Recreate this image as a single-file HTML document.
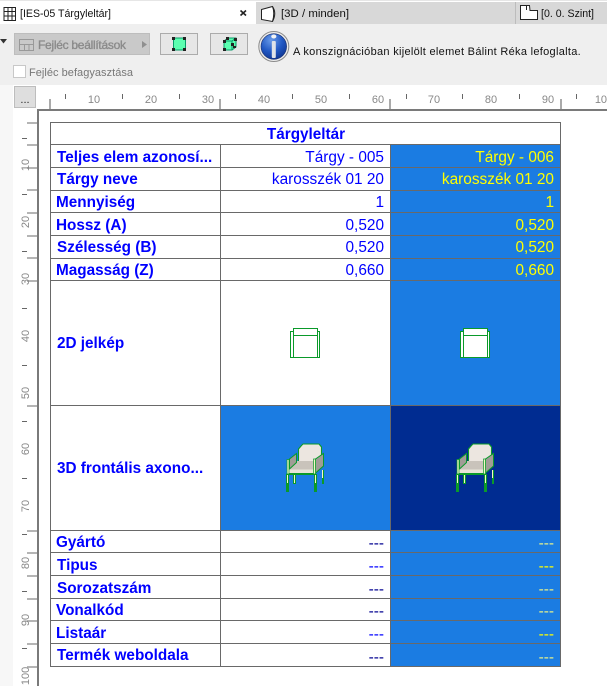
<!DOCTYPE html>
<html><head><meta charset="utf-8"><style>
html,body{margin:0;padding:0;background:#fff;width:607px;height:686px;overflow:hidden}
svg{display:block}
text{font-family:"Liberation Sans",Arial,sans-serif}
.t{font-size:11px;fill:#111}
.r{font-size:11px;fill:#888;text-anchor:middle}
.l{font-size:15.3px;font-weight:bold;fill:#0000ff}
.v{font-size:15.4px;fill:#0000ff;text-anchor:end}
.y{font-size:15.4px;fill:#ffff00;text-anchor:end}
.vd{font-size:15.4px;fill:#000090;text-anchor:end}
.yd{font-size:15.4px;fill:#e4f08c;text-anchor:end}
</style></head><body>
<svg width="607" height="686" viewBox="0 0 607 686" xmlns="http://www.w3.org/2000/svg">
<defs>
<radialGradient id="ib" cx="40%" cy="25%" r="80%"><stop offset="0" stop-color="#6a9be8"/><stop offset=".55" stop-color="#2259c4"/><stop offset="1" stop-color="#0e3490"/></radialGradient>
<g id="chair">
<g shape-rendering="crispEdges">
<path d="M286 474h3v18h-3zM314 474h3v18h-3zM293 474h3v10h-3zM322 470h2v14h-2z" fill="#0a9a2a"/>
<path d="M287 474h1v9h-1zM315 474h1v9h-1zM294 474h1v9h-1zM322 470h1v8h-1z" fill="#f6f6c8"/>
</g>
<path d="M298.500 461.500V449L301.500 445.500L303 444H319L321.500 447V461.500Z" fill="#ece6e0" stroke="#0a9a2a" stroke-width="1.100"/>
<path d="M297 461H315V469.500H288Z" fill="#c9c3bb"/>
<path d="M289.500 459V469L296.500 462.500V453.500Z" fill="#a09c96" stroke="#0a9a2a"/>
<path d="M315.500 459V473L323.500 466V453.500Z" fill="#a09c96" stroke="#0a9a2a"/>
<path d="M287.500 469.500H313.500V473H287.500Z" fill="#e8e4d8"/>
<path d="M286.500 473H316V475H286.500Z" fill="#0a9a2a"/>
<path d="M287 459.500H289V474H287ZM313.500 459H315.500V474H313.500Z" fill="#f6f6c8" stroke="#0a9a2a" stroke-width=".7"/>
</g>
</defs>

<!-- top tabs -->
<rect width="607" height="686" fill="#fff"/>
<rect x="256" y="2" width="351" height="22" fill="#d8d8d8"/>
<rect x="515" y="2" width="1" height="22" fill="#bcbcbc"/>
<rect x="0" y="0" width="607" height="1" fill="#e6e6e6"/>
<rect x="0" y="24" width="607" height="61" fill="#efefef"/>

<path d="M4 7.500H15.500V20.500H4ZM4 11.500H15.500M4 16H15.500M8 7.500V20.500M12 7.500V20.500" fill="none" stroke="#222" stroke-width="1"/>
<text x="20" y="17" class="t" textLength="91" lengthAdjust="spacingAndGlyphs">[IES-05 Tárgyleltár]</text>
<path d="M240.500 10.500L246 15.500M246 10.500L240.500 15.500" stroke="#222" stroke-width="1.600" fill="none"/>
<path d="M261.500 9.500L272.500 6.500Q277 13 272.500 21.500L261.500 19.500Z" fill="#fff" stroke="#222"/>
<path d="M272.500 6.500Q275 13 272.500 21.500" fill="none" stroke="#222"/>
<text x="281" y="17" class="t" textLength="68" lengthAdjust="spacingAndGlyphs">[3D / minden]</text>
<path d="M520.500 5.500H529.500L530 10.500H537.500V19.500H520.500Z" fill="#fff" stroke="#222"/>
<path d="M526.500 6V10" stroke="#222"/>
<text x="541" y="17" class="t" textLength="53" lengthAdjust="spacingAndGlyphs">[0. 0. Szint]</text>

<!-- toolbar -->
<path d="M0 39H7L3.500 43.500Z" fill="#333"/>
<rect x="14.500" y="33.500" width="135" height="21" fill="#c9c9c9" stroke="#bdbdbd"/>
<path d="M19.500 39.500H33.500V50.500H19.500ZM19.500 44.500H33.500M24.500 44.500V50.500M29 44.500V50.500" fill="none" stroke="#999"/>
<text x="38" y="49" font-size="12" fill="#8a8a8a" stroke="#8a8a8a" stroke-width=".35" textLength="88" lengthAdjust="spacing">Fejléc beállítások</text>
<path d="M142 41L147 44.500L142 48Z" fill="#8f8f8f"/>

<rect x="160.500" y="33.500" width="37" height="21" fill="#e6e6e6" stroke="#ababab"/>
<rect x="173.500" y="38" width="12" height="12" fill="#5cffb0" stroke="#0a9a6a"/>
<path d="M172 37h3v3h-3zM183 37h3v3h-3zM172 48h3v3h-3zM183 48h3v3h-3z" fill="#222"/>

<rect x="210.500" y="33.500" width="37" height="21" fill="#e6e6e6" stroke="#ababab"/>
<path d="M224 41L228 38H236V47L232 50H224Z" fill="#5cffb0" stroke="#0a9a6a"/>
<path d="M224 41H232V50M232 41L236 38" fill="none" stroke="#0a9a6a"/>
<path d="M223 40h3v3h-3zM226 37h3v3h-3zM234 38h3v3h-3zM231 43h3v3h-3zM223 48h3v3h-3zM233 46h3v2h-3z" fill="#222"/>

<circle cx="273.800" cy="46.500" r="15" fill="#ececec" stroke="#8a8a8a"/>
<circle cx="273.800" cy="46.500" r="12.800" fill="url(#ib)" stroke="#1a2f6a" stroke-width=".6"/>
<ellipse cx="273.800" cy="36.500" rx="2.600" ry="2" fill="#f4f4f4"/>
<rect x="271.800" y="41" width="4" height="17" rx="1" fill="#dfe3e8"/>
<text x="293" y="55" class="t" style="letter-spacing:.3px">A konszignációban kijelölt elemet Bálint Réka lefoglalta.</text>

<rect x="13.500" y="65.500" width="12" height="12" fill="#fff" stroke="#c8c8c8"/>
<text x="29" y="76" font-size="11" fill="#777" textLength="104" lengthAdjust="spacing">Fejléc befagyasztása</text>

<!-- ruler areas -->
<rect x="0" y="85" width="607" height="25" fill="#fff"/>
<rect x="0" y="85" width="13" height="601" fill="#f7f7f7"/>
<rect x="14.500" y="86.500" width="21" height="21" fill="#dedede" stroke="#bdbdbd"/>
<text x="25" y="103" font-size="11" fill="#222" text-anchor="middle">...</text>

<g shape-rendering="crispEdges">
<path d="M49 99h2v10h-2zM219 99h2v10h-2zM389 99h2v10h-2zM560 99h2v10h-2z" fill="#aaa"/>
<path d="M65 94h1v5h-1zM122 94h1v5h-1zM179 94h1v5h-1zM235 94h1v5h-1zM292 94h1v5h-1zM349 94h1v5h-1zM406 94h1v5h-1zM462 94h1v5h-1zM519 94h1v5h-1zM576 94h1v5h-1z" fill="#666"/>
<rect x="37" y="109" width="570" height="2" fill="#7a7a7a"/>
<rect x="37" y="109" width="2" height="577" fill="#7a7a7a"/>
<path d="M27 122h10v2h-10zM27 144h10v2h-10zM27 167h10v2h-10zM27 189h10v2h-10zM27 212h10v2h-10zM27 235h10v2h-10zM27 257h10v2h-10zM27 280h10v2h-10zM27 405h10v2h-10zM27 530h10v2h-10zM27 552h10v2h-10zM27 575h10v2h-10zM27 598h10v2h-10zM27 620h10v2h-10zM27 643h10v2h-10zM27 666h10v2h-10z" fill="#b5b5b5"/>
<path d="M22 138h5v1h-5zM22 194h5v1h-5zM22 251h5v1h-5zM22 308h5v1h-5zM22 365h5v1h-5zM22 421h5v1h-5zM22 478h5v1h-5zM22 534h5v1h-5zM22 591h5v1h-5zM22 648h5v1h-5z" fill="#666"/>
</g>
<text x="94" y="103" class="r">10</text><text x="151" y="103" class="r">20</text><text x="208" y="103" class="r">30</text><text x="264" y="103" class="r">40</text><text x="321" y="103" class="r">50</text><text x="378" y="103" class="r">60</text><text x="434" y="103" class="r">70</text><text x="491" y="103" class="r">80</text><text x="548" y="103" class="r">90</text><text x="604" y="103" class="r">100</text>
<text transform="translate(29,165) rotate(-90)" class="r">10</text>
<text transform="translate(29,222) rotate(-90)" class="r">20</text>
<text transform="translate(29,279) rotate(-90)" class="r">30</text>
<text transform="translate(29,336) rotate(-90)" class="r">40</text>
<text transform="translate(29,393) rotate(-90)" class="r">50</text>
<text transform="translate(29,449) rotate(-90)" class="r">60</text>
<text transform="translate(29,506) rotate(-90)" class="r">70</text>
<text transform="translate(29,563) rotate(-90)" class="r">80</text>
<text transform="translate(29,620) rotate(-90)" class="r">90</text>
<text transform="translate(29,676) rotate(-90)" class="r">100</text>

<!-- table fills -->
<g shape-rendering="crispEdges">
<rect x="50" y="122" width="511" height="545" fill="#fff"/>
<rect x="390" y="144" width="171" height="523" fill="#1b7ce2"/>
<rect x="220" y="405" width="170" height="125" fill="#1b7ce2"/>
<rect x="390" y="405" width="171" height="125" fill="#002c91"/>
<path d="M50 122h511v1h-511zM50 144h511v1h-511zM50 167h511v1h-511zM50 190h511v1h-511zM50 212h511v1h-511zM50 235h511v1h-511zM50 258h511v1h-511zM50 280h511v1h-511zM50 405h511v1h-511zM50 530h511v1h-511zM50 552h511v1h-511zM50 575h511v1h-511zM50 598h511v1h-511zM50 620h511v1h-511zM50 643h511v1h-511zM50 666h511v1h-511z" fill="#696969"/>
<path d="M50 122h1v545h-1zM560 122h1v545h-1zM220 144h1v523h-1zM390 144h1v523h-1z" fill="#696969"/>
</g>

<text x="306" y="139" class="l" text-anchor="middle">Tárgyleltár</text>
<text x="57" y="162" class="l">Teljes elem azonosí...</text>
<text x="57" y="184" class="l">Tárgy neve</text>
<text x="56" y="207" class="l">Mennyiség</text>
<text x="56" y="230" class="l">Hossz (A)</text>
<text x="57" y="252" class="l">Szélesség (B)</text>
<text x="56" y="275" class="l">Magasság (Z)</text>
<text x="57" y="348" class="l">2D jelkép</text>
<text x="57" y="473" class="l">3D frontális axono...</text>
<text x="56" y="547" class="l">Gyártó</text>
<text x="57" y="570" class="l">Tipus</text>
<text x="57" y="593" class="l">Sorozatszám</text>
<text x="56" y="615" class="l">Vonalkód</text>
<text x="56" y="638" class="l">Listaár</text>
<text x="57" y="660" class="l">Termék weboldala</text>

<text x="384" y="162" class="v">Tárgy - 005</text><text x="554" y="162" class="y">Tárgy - 006</text>
<text x="384" y="184" class="v">karosszék 01 20</text><text x="554" y="184" class="y">karosszék 01 20</text>
<text x="384" y="207" class="v">1</text><text x="554" y="207" class="y">1</text>
<text x="384" y="230" class="v">0,520</text><text x="554" y="230" class="y">0,520</text>
<text x="384" y="252" class="v">0,520</text><text x="554" y="252" class="y">0,520</text>
<text x="384" y="275" class="v">0,660</text><text x="554" y="275" class="y">0,660</text>

<text x="384" y="548.200" class="vd">---</text><text x="554" y="548.200" class="yd">---</text>
<text x="384" y="571.200" class="v">---</text><text x="554" y="571.200" class="y">---</text>
<text x="384" y="594.200" class="vd">---</text><text x="554" y="594.200" class="yd">---</text>
<text x="384" y="616.200" class="vd">---</text><text x="554" y="616.200" class="yd">---</text>
<text x="384" y="639.200" class="v">---</text><text x="554" y="639.200" class="y">---</text>
<text x="384" y="662.200" class="vd">---</text><text x="554" y="662.200" class="yd">---</text>

<!-- 2D symbols -->
<g fill="none" stroke="#0a9a2a" shape-rendering="crispEdges">
<rect x="290.500" y="331.500" width="29" height="26" fill="#fff"/>
<rect x="293.500" y="328.500" width="24" height="29" fill="#fff"/>
<path d="M293.500 335.500H317.500"/>
<rect x="460.500" y="331.500" width="29" height="26" fill="#fff"/>
<rect x="463.500" y="328.500" width="24" height="29" fill="#fff"/>
<path d="M463.500 335.500H487.500"/>
</g>

<!-- chairs -->
<use href="#chair"/>
<g transform="translate(170,0)"><use href="#chair"/></g>
</svg>
</body></html>
